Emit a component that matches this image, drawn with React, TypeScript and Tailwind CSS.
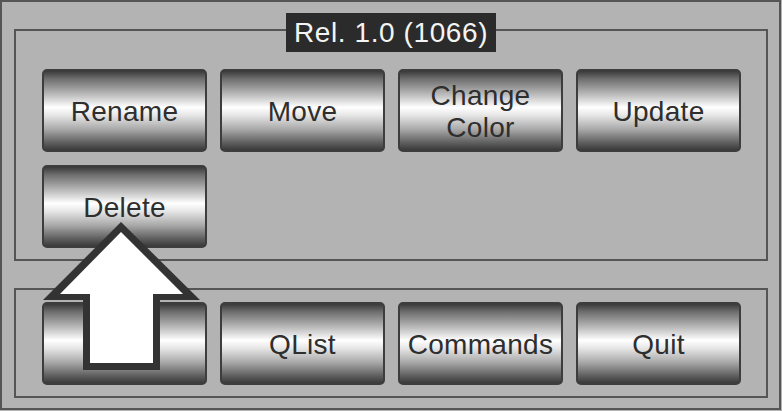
import React from "react";

const btnBg =
  "bg-[linear-gradient(to_bottom,#3a3a3a_0%,#6e6e6e_10%,#b4b4b4_28%,#ffffff_46%,#e6e6e6_56%,#a8a8a8_74%,#626262_90%,#3a3a3a_100%)]";

function Btn({ children }: { children: React.ReactNode }) {
  return (
    <div
      className={`w-[165px] h-[83px] rounded-[5px] border-2 border-[#3d3d3d] ${btnBg} flex items-center justify-center text-center text-[28px] tracking-[0.3px] leading-[32px] text-[#2e2e2e] pt-[3px]`}
    >
      {children}
    </div>
  );
}

export default function App() {
  return (
    <div className="relative w-[782px] h-[411px] bg-[#b3b3b3] font-['Liberation_Sans',Arial,sans-serif]">
      <div className="w-[781px] h-[410px] border-2 border-[#555555] flex flex-col">
        {/* Top panel */}
        <div className="relative ml-[12px] mt-[27px] w-[754px] h-[232px] border-2 border-[#555555] pl-[26px] pt-[38px]">
          <div className="absolute left-0 right-0 -top-[18px] flex justify-center">
            <div className="w-[210px] h-[39px] bg-[#2b2b2b] text-[#f4f4f4] text-[28px] tracking-[0.6px] leading-[39px] text-center">
              Rel. 1.0 (1066)
            </div>
          </div>
          <div className="grid grid-cols-[repeat(4,165px)] gap-x-[13px] gap-y-[13px]">
            <Btn>Rename</Btn>
            <Btn>Move</Btn>
            <Btn>
              Change
              <br />
              Color
            </Btn>
            <Btn>Update</Btn>
            <Btn>Delete</Btn>
          </div>
        </div>
        {/* Bottom panel */}
        <div className="ml-[12px] mt-[27px] w-[754px] h-[110px] border-2 border-[#555555] pl-[26px] pt-[12px]">
          <div className="grid grid-cols-[repeat(4,165px)] gap-x-[13px]">
            <Btn>{""}</Btn>
            <Btn>QList</Btn>
            <Btn>Commands</Btn>
            <Btn>Quit</Btn>
          </div>
        </div>
      </div>
      {/* Arrow overlay */}
      <svg
        className="absolute left-0 top-0 pointer-events-none"
        width="782"
        height="411"
        viewBox="0 0 782 411"
      >
        <polygon
          points="121,222 200,300 160,300 160,370 83,370 83,300 43,300"
          fill="#333333"
        />
        <polygon
          points="121,232 183,294 153,294 153,363 90,363 90,294 60,294"
          fill="#ffffff"
        />
      </svg>
    </div>
  );
}
